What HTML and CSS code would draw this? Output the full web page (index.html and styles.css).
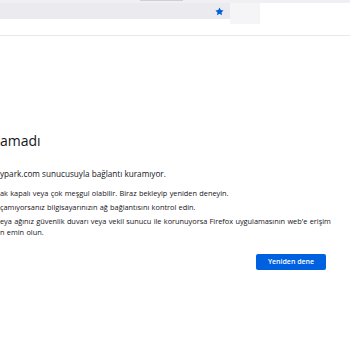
FILE: index.html
```html
<!DOCTYPE html>
<html lang="tr">
<head>
    <meta charset="UTF-8">
    <meta name="viewport" content="width=device-width, initial-scale=1.0">
    <title>Sayfa yüklenirken sorun oluştu</title>
    <link rel="stylesheet" href="styles.css">
</head>
<body>

    <div class="browser-chrome">
        <div class="tab-strip">
            <div class="tab-active"></div>
        </div>
        <div class="toolbar">
            <div class="url-bar">
                <svg class="star" viewBox="0 0 16 16" width="9" height="9">
                    <path d="M8 0.8l2.2 4.6 5 .7-3.6 3.5.9 5L8 12.2l-4.5 2.4.9-5L.8 6.1l5-.7z" fill="#0060df"/>
                </svg>
            </div>
            <div class="url-bar-end"></div>
        </div>
    </div>

    <div class="error-page">
        <h1 class="error-title">amadı</h1>
        <p class="error-desc">ypark.com sunucusuyla bağlantı kuramıyor.</p>
        <ul class="error-list">
            <li>ak kapalı veya çok meşgul olabilir. Biraz bekleyip yeniden deneyin.</li>
            <li>çamıyorsanız bilgisayarınızın ağ bağlantısını kontrol edin.</li>
            <li>eya ağınız güvenlik duvarı veya vekil sunucu ile korunuyorsa Firefox uygulamasının web'e erişim<br>n emin olun.</li>
        </ul>
        <div class="button-row">
            <button class="retry-btn">Yeniden dene</button>
        </div>
    </div>

</body>
</html>
```

FILE: styles.css
```css
body {
    margin: 0;
    overflow: hidden;
    background-color: #ffffff;
    font-family: 'Open Sans', 'Noto Sans', sans-serif;
    color: #15141a;
}

/* Browser toolbar */
.browser-chrome {
    height: 35px;
    border-bottom: 1px solid #e8e8ec;
}

.tab-strip {
    height: 3px;
    background-color: #f0f0f4;
}

.tab-active {
    margin-left: 140px;
    width: 43px;
    height: 1px;
    background-color: #cfcfd6;
}

.toolbar {
    display: flex;
    height: 21px;
}

.url-bar {
    width: 230px;
    height: 16px;
    background-color: #ebebef;
    display: flex;
    align-items: center;
    justify-content: flex-end;
    padding-right: 6px;
    box-sizing: border-box;
}

.url-bar-end {
    width: 30px;
    background-color: #f5f5f7;
}

/* Error page */
.error-page {
    padding-top: 96px;
    width: 326px;
}

.error-title {
    margin: 0;
    font-size: 14px;
    font-weight: 400;
    line-height: 18px;
    white-space: nowrap;
}

.error-desc {
    margin: 18px 0 0;
    font-size: 8.2px;
    line-height: 12px;
    white-space: nowrap;
}

.error-list {
    margin: 8px 0 0;
    padding: 0;
    list-style: none;
    font-size: 7.35px;
    line-height: 11px;
    word-spacing: 0.4px;
    white-space: nowrap;
}

.error-list li {
    margin-bottom: 3px;
}

.error-list li:last-child {
    margin-bottom: 0;
}

.button-row {
    display: flex;
    justify-content: flex-end;
    margin-top: 16px;
}

.retry-btn {
    width: 70px;
    height: 16px;
    border: none;
    border-radius: 2px;
    background-color: #0061e0;
    color: #ffffff;
    font-family: 'Open Sans', 'Noto Sans', sans-serif;
    font-size: 7px;
    font-weight: 600;
    line-height: 16px;
    padding: 0;
}
```
